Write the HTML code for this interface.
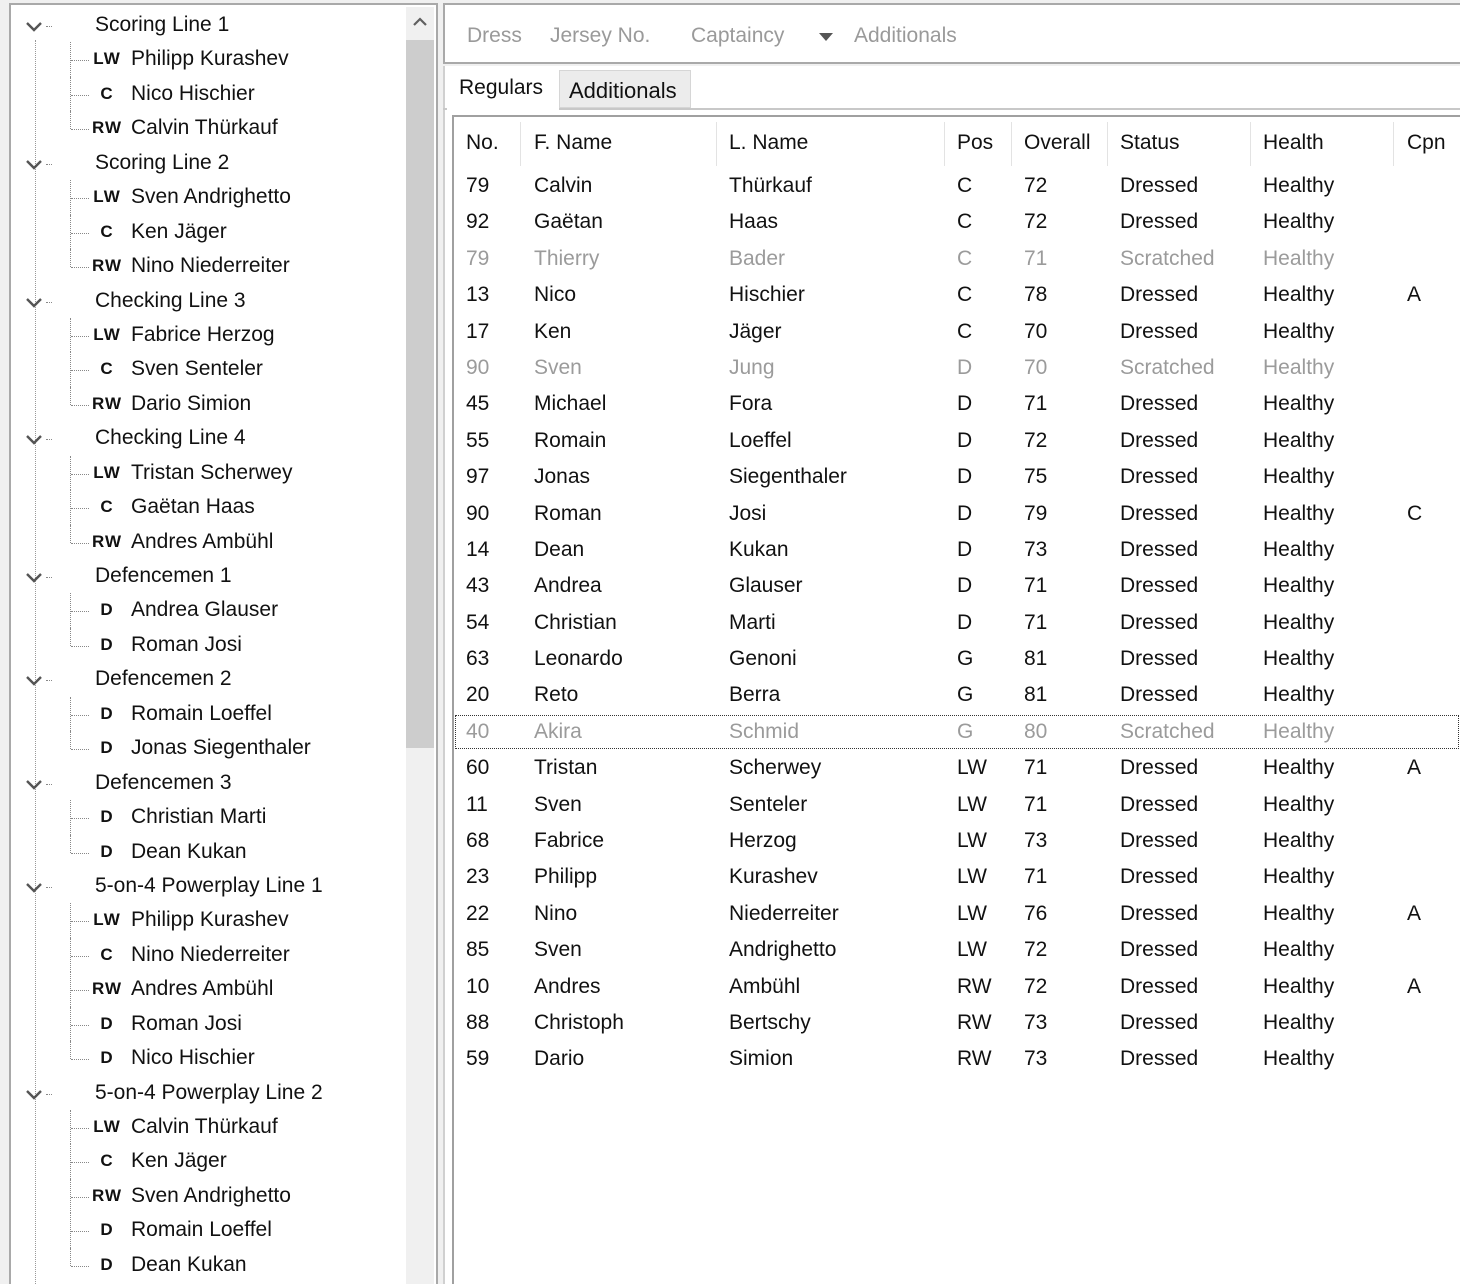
<!DOCTYPE html>
<html><head><meta charset="utf-8"><style>
*{margin:0;padding:0;box-sizing:border-box}
html,body{width:1460px;height:1284px;overflow:hidden}
body{background:#f0f0f0;position:relative;font-family:"Liberation Sans","DejaVu Sans",sans-serif;color:#111;font-size:21px}
.abs{position:absolute}
#tree{left:9px;top:3px;width:429px;height:1320px;background:#fff;border:2px solid #a9a9a9;overflow:hidden}
#sb{left:406px;top:7px;width:28px;height:1300px;background:#f0f0f0}
#thumb{left:406px;top:40px;width:28px;height:708px;background:#cdcdcd}
.tr{position:relative;height:34.45px;line-height:34.45px;white-space:nowrap}
.tr .h{position:absolute;left:86px}
.tr .p{position:absolute;left:80px;width:36px;text-align:center;font-family:"Liberation Sans",sans-serif;font-weight:bold;font-size:17px;letter-spacing:1px}
.tr .n{position:absolute;left:122px}
.tr .hd{position:absolute;left:62px;top:18px;width:18px;border-top:1px dotted #888}
.tr .vd{position:absolute;left:61px;top:0;height:34.45px;border-left:1px dotted #888}
.tr .cd{position:absolute;left:37px;top:18px;width:6px;border-top:1px dotted #888}
.chev{position:absolute;left:15px;top:12px}
#vline{left:35px;top:40px;height:1244px;border-left:1px dotted #999}
#tool{left:443px;top:3px;width:1030px;height:61px;background:#fff;border:2px solid #a9a9a9}
#tool span{position:absolute;top:19px;color:#9a9a9a;font-size:21px}
#tabarea{left:443px;top:66px;width:1030px;height:1230px;background:#fff;border-left:2px solid #d0d0d0}
#tab1{left:447px;top:68px;width:112px;height:44px;background:#fff;font-size:21px;padding:8px 0 0 12px}
#tab2{left:559px;top:70px;width:132px;height:38px;background:#ececec;border:1px solid #d6d6d6;font-size:22px;padding:7px 0 0 9px}
#grid{left:452px;top:115px;width:1020px;height:1180px;background:#fff;border-top:2px solid #a0a0a0;border-left:2px solid #a0a0a0}
.sep{position:absolute;top:122px;height:44px;border-left:1px solid #e3e3e3}
#rows{left:454px;top:168px;width:1006px}
.r{position:relative;height:36.4px;line-height:36.4px;white-space:nowrap}
.r span{position:absolute}
.r .a{left:12px}.r .b{left:80px}.r .c{left:275px}.r .d{left:503px}.r .e{left:570px}.r .f{left:666px}.r .g{left:809px}.r .k{left:953px}
.s{color:#9b9b9b}
.sel{outline:1px dotted #333;outline-offset:-2px}
</style></head><body>
<div id="tree" class="abs"></div>
<div id="sb" class="abs"></div>
<div id="thumb" class="abs"></div>
<svg class="abs" style="left:410px;top:14px" width="20" height="16"><path d="M4 11 L10 5 L16 11" stroke="#606060" stroke-width="2.2" fill="none"/></svg>
<div id="vline" class="abs"></div>
<div class="abs" style="left:9px;top:8px;width:397px">
<div class="tr"><svg class="chev" width="20" height="14"><path d="M3 3 L10 10 L17 3" stroke="#555" stroke-width="2.4" fill="none"/></svg><span class="cd"></span><span class="h">Scoring Line 1</span></div>
<div class="tr"><span class="vd"></span><span class="hd"></span><span class="p">LW</span><span class="n">Philipp Kurashev</span></div>
<div class="tr"><span class="vd"></span><span class="hd"></span><span class="p">C</span><span class="n">Nico Hischier</span></div>
<div class="tr"><span class="vd" style="height:18px"></span><span class="hd"></span><span class="p">RW</span><span class="n">Calvin Thürkauf</span></div>
<div class="tr"><svg class="chev" width="20" height="14"><path d="M3 3 L10 10 L17 3" stroke="#555" stroke-width="2.4" fill="none"/></svg><span class="cd"></span><span class="h">Scoring Line 2</span></div>
<div class="tr"><span class="vd"></span><span class="hd"></span><span class="p">LW</span><span class="n">Sven Andrighetto</span></div>
<div class="tr"><span class="vd"></span><span class="hd"></span><span class="p">C</span><span class="n">Ken Jäger</span></div>
<div class="tr"><span class="vd" style="height:18px"></span><span class="hd"></span><span class="p">RW</span><span class="n">Nino Niederreiter</span></div>
<div class="tr"><svg class="chev" width="20" height="14"><path d="M3 3 L10 10 L17 3" stroke="#555" stroke-width="2.4" fill="none"/></svg><span class="cd"></span><span class="h">Checking Line 3</span></div>
<div class="tr"><span class="vd"></span><span class="hd"></span><span class="p">LW</span><span class="n">Fabrice Herzog</span></div>
<div class="tr"><span class="vd"></span><span class="hd"></span><span class="p">C</span><span class="n">Sven Senteler</span></div>
<div class="tr"><span class="vd" style="height:18px"></span><span class="hd"></span><span class="p">RW</span><span class="n">Dario Simion</span></div>
<div class="tr"><svg class="chev" width="20" height="14"><path d="M3 3 L10 10 L17 3" stroke="#555" stroke-width="2.4" fill="none"/></svg><span class="cd"></span><span class="h">Checking Line 4</span></div>
<div class="tr"><span class="vd"></span><span class="hd"></span><span class="p">LW</span><span class="n">Tristan Scherwey</span></div>
<div class="tr"><span class="vd"></span><span class="hd"></span><span class="p">C</span><span class="n">Gaëtan Haas</span></div>
<div class="tr"><span class="vd" style="height:18px"></span><span class="hd"></span><span class="p">RW</span><span class="n">Andres Ambühl</span></div>
<div class="tr"><svg class="chev" width="20" height="14"><path d="M3 3 L10 10 L17 3" stroke="#555" stroke-width="2.4" fill="none"/></svg><span class="cd"></span><span class="h">Defencemen 1</span></div>
<div class="tr"><span class="vd"></span><span class="hd"></span><span class="p">D</span><span class="n">Andrea Glauser</span></div>
<div class="tr"><span class="vd" style="height:18px"></span><span class="hd"></span><span class="p">D</span><span class="n">Roman Josi</span></div>
<div class="tr"><svg class="chev" width="20" height="14"><path d="M3 3 L10 10 L17 3" stroke="#555" stroke-width="2.4" fill="none"/></svg><span class="cd"></span><span class="h">Defencemen 2</span></div>
<div class="tr"><span class="vd"></span><span class="hd"></span><span class="p">D</span><span class="n">Romain Loeffel</span></div>
<div class="tr"><span class="vd" style="height:18px"></span><span class="hd"></span><span class="p">D</span><span class="n">Jonas Siegenthaler</span></div>
<div class="tr"><svg class="chev" width="20" height="14"><path d="M3 3 L10 10 L17 3" stroke="#555" stroke-width="2.4" fill="none"/></svg><span class="cd"></span><span class="h">Defencemen 3</span></div>
<div class="tr"><span class="vd"></span><span class="hd"></span><span class="p">D</span><span class="n">Christian Marti</span></div>
<div class="tr"><span class="vd" style="height:18px"></span><span class="hd"></span><span class="p">D</span><span class="n">Dean Kukan</span></div>
<div class="tr"><svg class="chev" width="20" height="14"><path d="M3 3 L10 10 L17 3" stroke="#555" stroke-width="2.4" fill="none"/></svg><span class="cd"></span><span class="h">5-on-4 Powerplay Line 1</span></div>
<div class="tr"><span class="vd"></span><span class="hd"></span><span class="p">LW</span><span class="n">Philipp Kurashev</span></div>
<div class="tr"><span class="vd"></span><span class="hd"></span><span class="p">C</span><span class="n">Nino Niederreiter</span></div>
<div class="tr"><span class="vd"></span><span class="hd"></span><span class="p">RW</span><span class="n">Andres Ambühl</span></div>
<div class="tr"><span class="vd"></span><span class="hd"></span><span class="p">D</span><span class="n">Roman Josi</span></div>
<div class="tr"><span class="vd" style="height:18px"></span><span class="hd"></span><span class="p">D</span><span class="n">Nico Hischier</span></div>
<div class="tr"><svg class="chev" width="20" height="14"><path d="M3 3 L10 10 L17 3" stroke="#555" stroke-width="2.4" fill="none"/></svg><span class="cd"></span><span class="h">5-on-4 Powerplay Line 2</span></div>
<div class="tr"><span class="vd"></span><span class="hd"></span><span class="p">LW</span><span class="n">Calvin Thürkauf</span></div>
<div class="tr"><span class="vd"></span><span class="hd"></span><span class="p">C</span><span class="n">Ken Jäger</span></div>
<div class="tr"><span class="vd"></span><span class="hd"></span><span class="p">RW</span><span class="n">Sven Andrighetto</span></div>
<div class="tr"><span class="vd"></span><span class="hd"></span><span class="p">D</span><span class="n">Romain Loeffel</span></div>
<div class="tr"><span class="vd" style="height:18px"></span><span class="hd"></span><span class="p">D</span><span class="n">Dean Kukan</span></div>
</div>

<div id="tool" class="abs">
<span style="left:22px">Dress</span><span style="left:105px">Jersey No.</span><span style="left:246px">Captaincy</span>
<svg class="abs" style="left:374px;top:28px" width="14" height="9"><path d="M0 0 L14 0 L7 8Z" fill="#555"/></svg>
<span style="left:409px">Additionals</span>
</div>
<div id="tabarea" class="abs"></div>
<div class="abs" style="left:443px;top:108px;width:1020px;border-top:2px solid #c8c8c8"></div>
<div id="tab1" class="abs">Regulars</div>
<div id="tab2" class="abs">Additionals</div>
<div id="grid" class="abs"></div>
<div class="sep" style="left:520px"></div><div class="sep" style="left:716px"></div><div class="sep" style="left:944px"></div><div class="sep" style="left:1011px"></div><div class="sep" style="left:1107px"></div><div class="sep" style="left:1250px"></div><div class="sep" style="left:1393px"></div>
<div class="abs r" style="left:454px;top:125px;width:1006px"><span class="a">No.</span><span class="b">F. Name</span><span class="c">L. Name</span><span class="d">Pos</span><span class="e">Overall</span><span class="f">Status</span><span class="g">Health</span><span class="k">Cpn</span></div>
<div id="rows" class="abs">
<div class="r"><span class="a">79</span><span class="b">Calvin</span><span class="c">Thürkauf</span><span class="d">C</span><span class="e">72</span><span class="f">Dressed</span><span class="g">Healthy</span></div>
<div class="r"><span class="a">92</span><span class="b">Gaëtan</span><span class="c">Haas</span><span class="d">C</span><span class="e">72</span><span class="f">Dressed</span><span class="g">Healthy</span></div>
<div class="r s"><span class="a">79</span><span class="b">Thierry</span><span class="c">Bader</span><span class="d">C</span><span class="e">71</span><span class="f">Scratched</span><span class="g">Healthy</span></div>
<div class="r"><span class="a">13</span><span class="b">Nico</span><span class="c">Hischier</span><span class="d">C</span><span class="e">78</span><span class="f">Dressed</span><span class="g">Healthy</span><span class="k">A</span></div>
<div class="r"><span class="a">17</span><span class="b">Ken</span><span class="c">Jäger</span><span class="d">C</span><span class="e">70</span><span class="f">Dressed</span><span class="g">Healthy</span></div>
<div class="r s"><span class="a">90</span><span class="b">Sven</span><span class="c">Jung</span><span class="d">D</span><span class="e">70</span><span class="f">Scratched</span><span class="g">Healthy</span></div>
<div class="r"><span class="a">45</span><span class="b">Michael</span><span class="c">Fora</span><span class="d">D</span><span class="e">71</span><span class="f">Dressed</span><span class="g">Healthy</span></div>
<div class="r"><span class="a">55</span><span class="b">Romain</span><span class="c">Loeffel</span><span class="d">D</span><span class="e">72</span><span class="f">Dressed</span><span class="g">Healthy</span></div>
<div class="r"><span class="a">97</span><span class="b">Jonas</span><span class="c">Siegenthaler</span><span class="d">D</span><span class="e">75</span><span class="f">Dressed</span><span class="g">Healthy</span></div>
<div class="r"><span class="a">90</span><span class="b">Roman</span><span class="c">Josi</span><span class="d">D</span><span class="e">79</span><span class="f">Dressed</span><span class="g">Healthy</span><span class="k">C</span></div>
<div class="r"><span class="a">14</span><span class="b">Dean</span><span class="c">Kukan</span><span class="d">D</span><span class="e">73</span><span class="f">Dressed</span><span class="g">Healthy</span></div>
<div class="r"><span class="a">43</span><span class="b">Andrea</span><span class="c">Glauser</span><span class="d">D</span><span class="e">71</span><span class="f">Dressed</span><span class="g">Healthy</span></div>
<div class="r"><span class="a">54</span><span class="b">Christian</span><span class="c">Marti</span><span class="d">D</span><span class="e">71</span><span class="f">Dressed</span><span class="g">Healthy</span></div>
<div class="r"><span class="a">63</span><span class="b">Leonardo</span><span class="c">Genoni</span><span class="d">G</span><span class="e">81</span><span class="f">Dressed</span><span class="g">Healthy</span></div>
<div class="r"><span class="a">20</span><span class="b">Reto</span><span class="c">Berra</span><span class="d">G</span><span class="e">81</span><span class="f">Dressed</span><span class="g">Healthy</span></div>
<div class="r s sel"><span class="a">40</span><span class="b">Akira</span><span class="c">Schmid</span><span class="d">G</span><span class="e">80</span><span class="f">Scratched</span><span class="g">Healthy</span></div>
<div class="r"><span class="a">60</span><span class="b">Tristan</span><span class="c">Scherwey</span><span class="d">LW</span><span class="e">71</span><span class="f">Dressed</span><span class="g">Healthy</span><span class="k">A</span></div>
<div class="r"><span class="a">11</span><span class="b">Sven</span><span class="c">Senteler</span><span class="d">LW</span><span class="e">71</span><span class="f">Dressed</span><span class="g">Healthy</span></div>
<div class="r"><span class="a">68</span><span class="b">Fabrice</span><span class="c">Herzog</span><span class="d">LW</span><span class="e">73</span><span class="f">Dressed</span><span class="g">Healthy</span></div>
<div class="r"><span class="a">23</span><span class="b">Philipp</span><span class="c">Kurashev</span><span class="d">LW</span><span class="e">71</span><span class="f">Dressed</span><span class="g">Healthy</span></div>
<div class="r"><span class="a">22</span><span class="b">Nino</span><span class="c">Niederreiter</span><span class="d">LW</span><span class="e">76</span><span class="f">Dressed</span><span class="g">Healthy</span><span class="k">A</span></div>
<div class="r"><span class="a">85</span><span class="b">Sven</span><span class="c">Andrighetto</span><span class="d">LW</span><span class="e">72</span><span class="f">Dressed</span><span class="g">Healthy</span></div>
<div class="r"><span class="a">10</span><span class="b">Andres</span><span class="c">Ambühl</span><span class="d">RW</span><span class="e">72</span><span class="f">Dressed</span><span class="g">Healthy</span><span class="k">A</span></div>
<div class="r"><span class="a">88</span><span class="b">Christoph</span><span class="c">Bertschy</span><span class="d">RW</span><span class="e">73</span><span class="f">Dressed</span><span class="g">Healthy</span></div>
<div class="r"><span class="a">59</span><span class="b">Dario</span><span class="c">Simion</span><span class="d">RW</span><span class="e">73</span><span class="f">Dressed</span><span class="g">Healthy</span></div>
</div>
</body></html>
